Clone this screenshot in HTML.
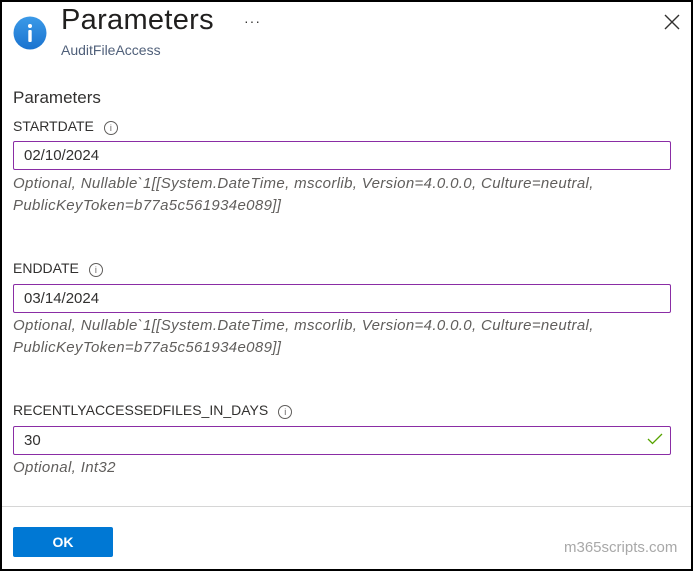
<!DOCTYPE html>
<html><head><style>
*{margin:0;padding:0;box-sizing:border-box}
body{width:693px;height:571px;background:#fff;font-family:"Liberation Sans",sans-serif;position:relative;overflow:hidden;color:#323130}
.frame{position:absolute;left:0;top:0;width:693px;height:571px;border:2px solid #000}
.a{position:absolute;white-space:nowrap}
.lbl{font-size:14px;color:#323130}
.inp{position:absolute;left:13px;width:658px;height:29px;border:1px solid #8a2da5;border-radius:2px;font-size:15px;padding:5px 10px;color:#323130}
.help{font-size:15px;font-style:italic;color:#605e5c;line-height:22px;letter-spacing:0.35px}
.ii{display:inline-block;width:14px;height:14px;border:1px solid #605e5c;border-radius:50%;font-size:9px;text-align:center;line-height:12px;font-style:normal;margin-left:10px;vertical-align:0px;color:#605e5c}
</style></head><body>
<div class="frame"></div>
<svg class="a" style="left:13px;top:16px" width="34" height="34"><defs><linearGradient id="g" x1="0" y1="0" x2="0" y2="1"><stop offset="0" stop-color="#3b9ae8"/><stop offset="1" stop-color="#1a73cf"/></linearGradient></defs><circle cx="17" cy="17" r="16.5" fill="url(#g)"/><circle cx="17" cy="10" r="2" fill="#fff"/><rect x="15.3" y="14" width="3.4" height="12" rx="1" fill="#fff"/></svg>
<div class="a" style="left:61px;top:4px;font-size:29px;color:#201f1e;letter-spacing:0.3px">Parameters</div>
<div class="a" style="left:244px;top:13px;font-size:14px;color:#323130;letter-spacing:1px">···</div>
<svg class="a" style="left:664px;top:14px" width="16" height="16"><path d="M1 1L15 15M15 1L1 15" stroke="#323130" stroke-width="1.4"/></svg>
<div class="a" style="left:61px;top:42px;font-size:14px;color:#50607a">AuditFileAccess</div>
<div class="a" style="left:13px;top:88px;font-size:17px">Parameters</div>

<div class="a lbl" style="left:13px;top:118px">STARTDATE<span class="ii">i</span></div>
<div class="inp" style="top:141px">02/10/2024</div>
<div class="a help" style="left:13px;top:173px">Optional, Nullable`1[[System.DateTime, mscorlib, Version=4.0.0.0, Culture=neutral,<br>PublicKeyToken=b77a5c561934e089]]</div>

<div class="a lbl" style="left:13px;top:260px">ENDDATE<span class="ii">i</span></div>
<div class="inp" style="top:284px">03/14/2024</div>
<div class="a help" style="left:13px;top:315px">Optional, Nullable`1[[System.DateTime, mscorlib, Version=4.0.0.0, Culture=neutral,<br>PublicKeyToken=b77a5c561934e089]]</div>

<div class="a lbl" style="left:13px;top:402px">RECENTLYACCESSEDFILES_IN_DAYS<span class="ii">i</span></div>
<div class="inp" style="top:426px">30</div>
<svg class="a" style="left:647px;top:433px" width="16" height="12"><path d="M1 6L5.5 10.5L15 1" stroke="#57a300" stroke-width="1.3" fill="none"/></svg>
<div class="a help" style="left:13px;top:457px">Optional, Int32</div>

<div class="a" style="left:2px;top:506px;width:689px;height:1px;background:#d6d6d6"></div>
<div class="a" style="left:13px;top:527px;width:100px;height:30px;background:#0078d4;border-radius:2px;color:#fff;font-weight:bold;font-size:14px;text-align:center;line-height:30px">OK</div>
<div class="a" style="left:564px;top:539px;font-size:15px;color:#a8a8a8">m365scripts.com</div>
</body></html>
